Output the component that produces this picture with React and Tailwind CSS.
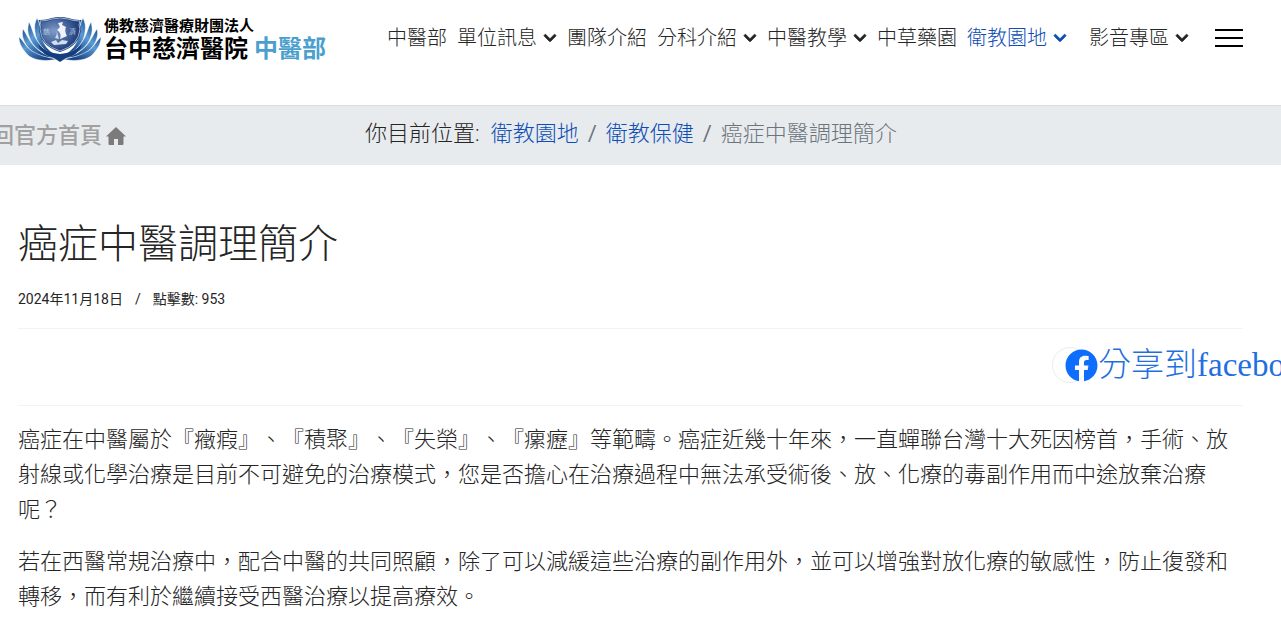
import { FaChevronDown } from "react-icons/fa";

const navItems = [
  { label: "中醫部" },
  { label: "單位訊息", caret: true },
  { label: "團隊介紹" },
  { label: "分科介紹", caret: true },
  { label: "中醫教學", caret: true },
  { label: "中草藥園" },
  { label: "衛教園地", caret: true, active: true },
  { label: "影音專區", caret: true },
];

const crumbs = ["衛教園地", "衛教保健"];

const paragraphs = [
  "癌症在中醫屬於『癥瘕』、『積聚』、『失榮』、『瘰癧』等範疇。癌症近幾十年來，一直蟬聯台灣十大死因榜首，手術、放射線或化學治療是目前不可避免的治療模式，您是否擔心在治療過程中無法承受術後、放、化療的毒副作用而中途放棄治療呢？",
  "若在西醫常規治療中，配合中醫的共同照顧，除了可以減緩這些治療的副作用外，並可以增強對放化療的敏感性，防止復發和轉移，而有利於繼續接受西醫治療以提高療效。",
];

// left half of the lotus, back petal first; the right half is mirrored
const petals = [
  "M19 2C22 7 23 14 24 22C26 29 30 34 36 38C25 35 18 27 17 16C16 10 17 6 19 2Z",
  "M11 6C14 11 15 19 20 26C24 32 29 37 36 40C24 38 14 31 11 20C9 15 10 10 11 6Z",
  "M5 13C8 17 10 23 16 30C21 35 28 40 37 42C24 42 12 37 7 27C4 21 4 17 5 13Z",
  "M1 21C5 24 7 30 14 35C21 39 29 42 40 43C26 46 14 44 9 38C4 33 1 27 1 21Z",
];

function Emblem() {
  return (
    <svg viewBox="0 0 84 46" className="h-[46px] w-[84px] shrink-0" aria-hidden="true">
      <defs>
        <linearGradient id="petal" x1="0" y1="0" x2="0.7" y2="1">
          <stop offset="0" stopColor="#1a4f94" />
          <stop offset="0.4" stopColor="#5c9bd3" />
          <stop offset="1" stopColor="#0c3879" />
        </linearGradient>
        <radialGradient id="shield" cx="0.35" cy="0.4" r="0.65">
          <stop offset="0" stopColor="#7f9ccb" />
          <stop offset="1" stopColor="#1b3878" />
        </radialGradient>
      </defs>
      {[undefined, "translate(84 0) scale(-1 1)"].map((flip, i) => (
        <g key={i} transform={flip} fill="url(#petal)" stroke="#fff" strokeWidth="0.5">
          {petals.map((d) => (
            <path key={d} d={d} />
          ))}
        </g>
      ))}
      <path d="M20 28Q28 37 42 38Q56 37 64 28Q60 40 48 42L42 46L36 42Q24 40 20 28Z" fill="#143f7e" />
      <path
        d="M22 5Q29 5 34 3Q42 1 50 3Q55 5 62 5Q60 9 62 13Q61 29 42 35Q23 29 22 13Q24 9 22 5Z"
        fill="url(#shield)"
        stroke="#1d3f7c"
        strokeWidth="2"
      />
      <path
        d="M22 5Q29 5 34 3Q42 1 50 3Q55 5 62 5Q60 9 62 13Q61 29 42 35Q23 29 22 13Q24 9 22 5Z"
        fill="none"
        stroke="#c3d2e6"
        strokeWidth="0.8"
      />
      <path d="M40 7L45 6L44 9L48 11Q46 15 49 20L42 23Q44 17 39 14L42 11Z" fill="#eef4fa" />
      <path d="M38 13Q40 18 37 22L41 23ZM33 26L38 24L40 27L44 24L50 25L48 28L36 29Z" fill="#d3dfee" />
      <g fill="#dbe5f2" fontFamily="Noto Sans CJK TC, sans-serif" fontSize="7">
        <text x="25" y="18">慈</text>
        <text x="51" y="18">濟</text>
      </g>
    </svg>
  );
}

function FacebookMark() {
  return (
    <svg viewBox="0 0 512 512" className="size-[33px] shrink-0" aria-hidden="true">
      <path
        fill="#0d6efd"
        d="M504 256C504 119 393 8 256 8S8 119 8 256c0 123.800 90.700 226.400 209.300 245V327.700h-63V256h63v-54.600c0-62.200 37-96.500 93.700-96.500 27.100 0 55.500 4.800 55.500 4.800v61h-31.300c-30.800 0-40.400 19.100-40.400 38.700V256h68.800l-11 71.700h-57.800V501C413.300 482.400 504 379.800 504 256z"
      />
    </svg>
  );
}

export default function App() {
  return (
    <div className="min-h-screen overflow-x-hidden bg-white font-['Roboto','Noto_Sans_CJK_TC',sans-serif] font-light text-[#252525] [text-spacing-trim:space-all]">
      <header className="flex h-[105px] items-start px-[18px]">
        <a href="#" className="flex items-center gap-0.5 pt-4">
          <Emblem />
          <span className="flex flex-col whitespace-nowrap text-black">
            <span className="text-[15px] leading-[20px] font-bold">佛教慈濟醫療財團法人</span>
            <span className="flex gap-1.5 text-[24px] leading-[26px] font-bold">
              台中慈濟醫院
              <span className="text-[#4b9fcf]">中醫部</span>
            </span>
          </span>
        </a>
        <nav className="ml-auto flex items-center gap-2.5 pt-[23px] text-[20px] leading-[30px] whitespace-nowrap">
          {navItems.map(({ label, caret, active }) => (
            <a
              key={label}
              href="#"
              className={`flex items-center gap-1.5 ${active ? "mr-3 text-[#0d4db5]" : ""}`}
            >
              {label}
              {caret && <FaChevronDown size={14} stroke="currentColor" strokeWidth={30} />}
            </a>
          ))}
        </nav>
        <button type="button" aria-label="選單" className="mt-[29px] mr-5 ml-[26px] flex w-7 flex-col gap-[6px]">
          <span className="h-0.5 bg-black" />
          <span className="h-0.5 bg-black" />
          <span className="h-0.5 bg-black" />
        </button>
      </header>

      <div className="flex h-[60px] items-center border-t border-[#dcdee0] bg-[#e8ebee] text-[22px] leading-[34px] whitespace-nowrap">
        <a href="#" className="-ml-2 flex w-[373px] items-center gap-1 font-medium text-[#a0a0a0]">
          回官方首頁
          <svg viewBox="0 0 20 20" className="size-5 fill-[#7b7b7b]" aria-hidden="true">
            <path d="M10 1L20 10.500H17.500V18Q17.500 19 16.500 19H12V13H8V19H3.500Q2.500 19 2.500 18V10.500H0Z" />
          </svg>
        </a>
        <ol className="flex pb-1">
          <li className="mr-[11px]">你目前位置:</li>
          {crumbs.map((crumb) => (
            <li key={crumb} className="flex">
              <a href="#" className="text-[#0d4db5]">{crumb}</a>
              <span className="px-[9px] font-normal text-[#6c757d]">/</span>
            </li>
          ))}
          <li className="text-[#6c757d]">癌症中醫調理簡介</li>
        </ol>
      </div>

      <main className="pt-[54px] pr-[38px] pl-[18px]">
        <h1 className="text-[40px] leading-[52px]">癌症中醫調理簡介</h1>
        <div className="mt-[18px] flex text-[14px] leading-[20px] font-normal">
          <span>2024年11月18日</span>
          <span className="px-3">/</span>
          <span>點擊數: 953</span>
        </div>
        <div className="mt-[19px] flex h-[78px] items-start justify-end border-y border-[#f3f3f3] pt-[18px]">
          <a
            href="#"
            className="mr-[155px] flex h-9 w-9 items-center rounded-full border border-[#ececec] pl-3 font-['Liberation_Serif','Noto_Sans_CJK_TC',serif] text-[33px] leading-9 whitespace-nowrap text-[#1f6fe0]"
          >
            <FacebookMark />
            分享到facebook
          </a>
        </div>
        <div className="mt-4 space-y-[17px] text-[22px] leading-[35px]">
          {paragraphs.map((text) => (
            <p key={text}>{text}</p>
          ))}
        </div>
      </main>
    </div>
  );
}
